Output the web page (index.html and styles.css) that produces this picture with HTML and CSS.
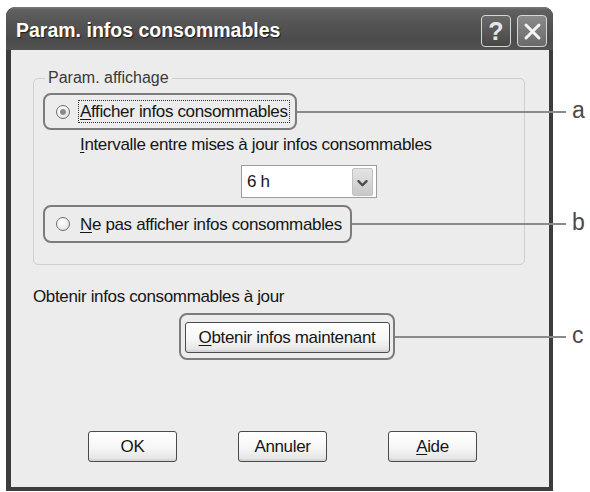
FILE: index.html
```html
<!DOCTYPE html>
<html lang="fr">
<head>
<meta charset="utf-8">
<title>Param. infos consommables</title>
<link rel="stylesheet" href="styles.css">
</head>
<body>
<div class="window">
  <div class="titlebar">
    <span class="title">Param. infos consommables</span>
    <div class="tb-buttons">
      <span class="tb-btn help">?</span>
      <span class="tb-btn close">
        <svg width="27" height="29" viewBox="0 0 27 29"><path d="M7 8 L20 21 M20 8 L7 21" stroke="#f4f4f4" stroke-width="3" stroke-linecap="round"/></svg>
      </span>
    </div>
  </div>
  <div class="client">
    <div class="group">
      <span class="group-label">Param. affichage</span>
      <div class="callout callout-a">
        <span class="radio checked"></span>
        <span class="focus"><u>A</u>fficher infos consommables</span>
        <span class="leader leader-a"><span class="tag">a</span></span>
      </div>
      <div class="interval-label"><u>I</u>ntervalle entre mises à jour infos consommables</div>
      <div class="combo">
        <span class="combo-value">6 h</span>
        <span class="combo-arrow"><svg width="21" height="28" viewBox="0 0 21 28"><path d="M6 12 L10.5 16.5 L15 12" fill="none" stroke="#4a4a4a" stroke-width="2.6" stroke-linecap="round" stroke-linejoin="round"/></svg></span>
      </div>
      <div class="callout callout-b">
        <span class="radio"></span>
        <span class="opt-text"><u>N</u>e pas afficher infos consommables</span>
        <span class="leader leader-b"><span class="tag">b</span></span>
      </div>
    </div>
    <div class="section-label">Obtenir infos consommables à jour</div>
    <div class="callout callout-c">
      <button class="btn btn-wide" type="button"><u>O</u>btenir infos maintenant</button>
      <span class="leader leader-c"><span class="tag">c</span></span>
    </div>
    <div class="actions">
      <button class="btn" type="button">OK</button>
      <button class="btn" type="button">Annuler</button>
      <button class="btn" type="button"><u>A</u>ide</button>
    </div>
  </div>
</div>
</body>
</html>
```
FILE: styles.css
```css
* { box-sizing: border-box; }
html, body { margin: 0; padding: 0; background: #ffffff; }
body {
  font-family: "Liberation Sans", Arial, sans-serif;
  font-size: 17px;
  letter-spacing: -0.35px;
  color: #161616;
  white-space: nowrap;
}
u { text-decoration: underline; text-underline-offset: 2px; text-decoration-thickness: 1px; }

.window {
  margin: 7px 0 0 6px;
  width: 547px;
  height: 484px;
  background: #3d3d3d;
  border-radius: 9px 9px 0 0;
  display: flex;
  flex-direction: column;
}

.titlebar {
  height: 43px;
  flex: none;
  display: flex;
  justify-content: space-between;
  padding: 0 6px 0 10px;
  border-radius: 9px 9px 0 0;
  background: linear-gradient(#7a7a7a 0, #606060 3px, #545454 40%, #4b4b4b 75%, #525252 100%);
}
.title {
  font-weight: bold;
  font-size: 19.5px;
  letter-spacing: 0;
  color: #ffffff;
  line-height: 43px;
  padding-top: 2px;
  text-shadow: 1px 1px 1px #1c1c1c;
}
.tb-buttons { display: flex; gap: 6px; padding-top: 8px; }
.tb-btn {
  width: 30px;
  height: 32px;
  border: 1.5px solid #d6d6d6;
  border-radius: 4px;
  display: flex;
  align-items: center;
  justify-content: center;
}
.help {
  background: linear-gradient(#6a6a6a, #474747);
  font-weight: bold;
  font-size: 25px;
  letter-spacing: 0;
  color: #e6e6e6;
  line-height: 1;
}
.close { background: linear-gradient(#8a8a8a, #6a6a6a); }

.client {
  flex: 1;
  margin: 0 4px 4px 5px;
  background: #ececec;
}

.group {
  position: relative;
  margin: 28px 24px 0 22px;
  border: 1px solid #cfcfcf;
  border-radius: 5px;
  padding: 0 0 21px 0;
}
.group-label {
  position: absolute;
  top: -11px;
  left: 11px;
  padding: 0 3px;
  background: #ececec;
  font-size: 16px;
  letter-spacing: 0;
  line-height: 20px;
  color: #3a3a3a;
}

.callout {
  position: relative;
  display: flex;
  align-items: center;
  border: 2px solid #7c7c7c;
  border-radius: 8px;
}
.callout-a { margin: 14px 0 0 9px; width: 254px; height: 37px; padding-left: 11px; }
.callout-b { margin: 7px 0 0 9px; width: 309px; height: 38px; padding-left: 11px; }
.callout-c { margin: 6px 0 0 168px; width: 216px; height: 47px; justify-content: center; padding-top: 2px; }

.leader {
  position: absolute;
  left: calc(100% + 2px);
  top: 50%;
  height: 2px;
  margin-top: -1px;
  background: #8a8a8a;
}
.leader-a { width: 269px; }
.leader-b { width: 214px; }
.leader-c { width: 171px; }
.tag {
  position: absolute;
  left: calc(100% + 6px);
  top: -14px;
  font-size: 23px;
  letter-spacing: 0;
  line-height: 26px;
  color: #4a4a4a;
}

.radio {
  flex: none;
  width: 14px;
  height: 14px;
  margin-right: 8px;
  border-radius: 50%;
  border: 1px solid #6e6e6e;
  background: radial-gradient(circle at 40% 35%, #ffffff 0, #f2f2f2 45%, #d4d4d4 100%);
  display: flex;
  align-items: center;
  justify-content: center;
}
.radio.checked::after {
  content: "";
  width: 6px;
  height: 6px;
  border-radius: 50%;
  background: #8c8c8c;
}
.focus {
  border: 1px dotted #333;
  padding: 0 1px 0 1px;
  line-height: 21px;
}
.opt-text { line-height: 21px; padding-left: 2px; }

.interval-label { margin: 5px 0 0 46px; line-height: 20px; }

.combo {
  margin: 10px 0 0 207px;
  width: 136px;
  height: 33px;
  border: 1px solid #9c9c9c;
  background: #ffffff;
  display: flex;
  align-items: center;
  justify-content: space-between;
  padding: 0 3px 0 5px;
}
.combo-arrow {
  width: 21px;
  height: 28px;
  border-radius: 2px;
  background: linear-gradient(#e4e4e4, #c8c8c8);
  border: 1px solid #c2c2c2;
  display: flex;
}

.section-label { margin: 22px 0 0 22px; line-height: 20px; }

.btn {
  width: 89px;
  height: 31px;
  padding: 0;
  font: inherit;
  letter-spacing: inherit;
  color: #161616;
  border: 1px solid #4a4a4a;
  border-radius: 3px;
  background: linear-gradient(#ffffff 0, #f6f6f6 55%, #e2e2e2 100%);
  box-shadow: inset 0 -2px 0 #d6d6d6;
  line-height: 29px;
}
.btn-wide { width: 205px; }

.actions { margin: 71px 0 0 77px; display: flex; gap: 61px; }
```
